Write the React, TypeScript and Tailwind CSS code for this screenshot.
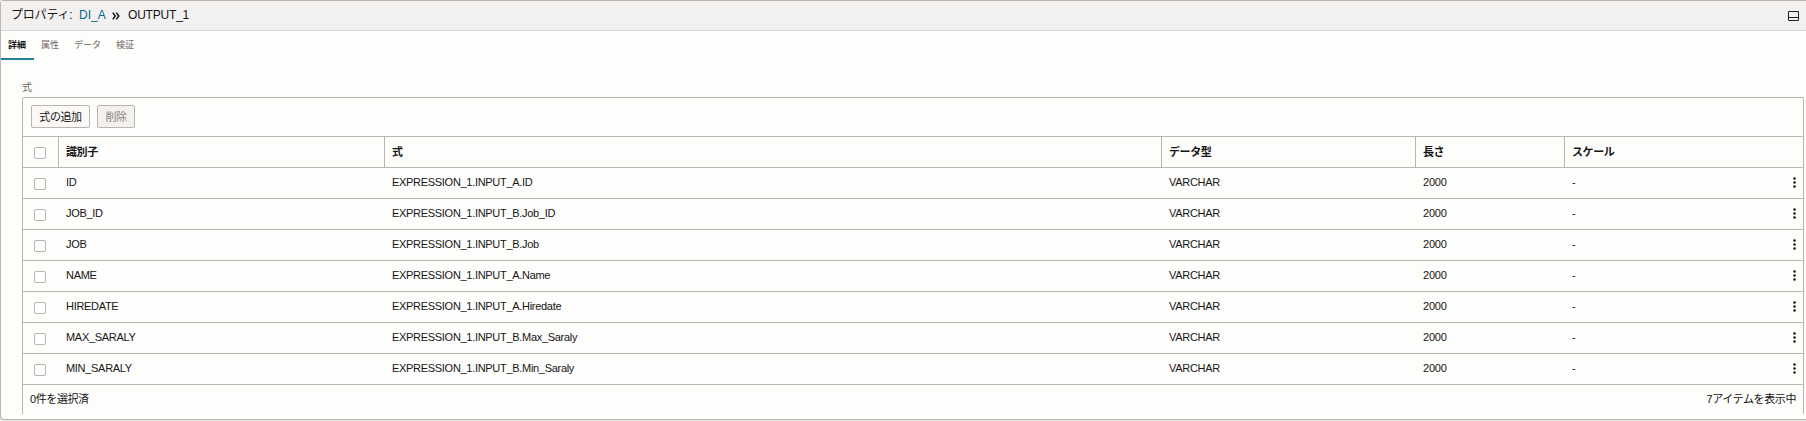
import clsx from "clsx";

const TABS = [
  { label: "詳細", className: "w-[33px] pl-[7px]" },
  { label: "属性", className: "w-[33px] pl-[7px]" },
  { label: "データ", className: "w-[42px] pl-[7px]" },
  { label: "検証", className: "w-[34px] pl-[7px]" },
];

const COLUMNS = ["識別子", "式", "データ型", "長さ", "スケール"];

const ROWS = [
  { id: "ID", expression: "EXPRESSION_1.INPUT_A.ID" },
  { id: "JOB_ID", expression: "EXPRESSION_1.INPUT_B.Job_ID" },
  { id: "JOB", expression: "EXPRESSION_1.INPUT_B.Job" },
  { id: "NAME", expression: "EXPRESSION_1.INPUT_A.Name" },
  { id: "HIREDATE", expression: "EXPRESSION_1.INPUT_A.Hiredate" },
  { id: "MAX_SARALY", expression: "EXPRESSION_1.INPUT_B.Max_Saraly" },
  { id: "MIN_SARALY", expression: "EXPRESSION_1.INPUT_B.Min_Saraly" },
];

const GRID = "grid grid-cols-[35px_326px_777px_254px_149px_1fr]";

function Checkbox() {
  return (
    <div className="pt-[10px] pl-[11px]">
      <span role="checkbox" aria-checked="false" className="block size-3 rounded-[2px] border border-[#b9b4ae] bg-white" />
    </div>
  );
}

function MoreIcon() {
  return (
    <svg width="3" height="11" viewBox="0 0 3 11" fill="#161513">
      <circle cx="1.5" cy="1.5" r="1.25" />
      <circle cx="1.5" cy="5.5" r="1.25" />
      <circle cx="1.5" cy="9.5" r="1.25" />
    </svg>
  );
}

function PanelHeader() {
  return (
    <header className="flex h-[30px] items-center justify-between border-b border-[#d1d5da] bg-[#f3f1f0] pr-[7px] pl-[10px] text-[12px] leading-[27px]">
      <div className="flex whitespace-pre">
        <span className="w-[68px] tracking-[-0.2px]">プロパティ: </span>
        <span className="w-[32px] text-[#006b8f]">DI_A</span>
        <svg className="mt-[10px] mr-[8px] ml-px" width="8" height="8" viewBox="0 0 8 8" fill="none" stroke="#161513" strokeWidth="1.5">
          <path d="M.8 .6 3.3 4 .8 7.4M4.3 .6 6.8 4 4.3 7.4" />
        </svg>
        <span className="tracking-[-0.2px]">OUTPUT_1</span>
      </div>
      <svg className="mt-px" width="11" height="10" viewBox="0 0 11 10" fill="none" stroke="#222" strokeWidth="1">
        <path d="M.5 .5h10v9H.5zM.5 6.5h10" />
      </svg>
    </header>
  );
}

function Tabs() {
  return (
    <nav className="flex h-[29px] text-[9px] leading-[29px] text-[#6f6a67]">
      {TABS.map((tab, i) => (
        <div key={tab.label} className={clsx(tab.className, i === 0 && "border-b-2 border-[#227e9e] font-bold text-[#161513]")}>
          {tab.label}
        </div>
      ))}
    </nav>
  );
}

export default function App() {
  return (
    <div className="h-[421px] overflow-hidden bg-[#e9e8e6] font-['Liberation_Sans','Noto_Sans_CJK_JP',sans-serif] text-[#161513]">
      <div className="flex h-[420px] flex-col rounded-l-[4px] border border-r-0 border-[#bbb5af] bg-[#fdfdfc]">
        <PanelHeader />
        <Tabs />
        <main className="flex flex-1 flex-col pr-[2px] pb-[5px] pl-[21px]">
          <div className="mt-[20px] h-[17px] text-[10px] leading-[15px] text-[#6f6a67]">式</div>
          <section className="flex-1 rounded-t-[2px] border border-b-0 border-[#bbb5af] text-[11px]">
            <div className="flex h-[38px] gap-[7px] pt-[7px] pl-2 text-[11px] leading-[20px] tracking-[-0.4px]">
              <button className="h-[23px] w-[59px] rounded-[2px] border border-[#bbb5af] bg-[#faf9f8]">式の追加</button>
              <button className="h-[23px] w-[38px] rounded-[2px] border border-[#bbb5af] bg-[#f3f1f0] text-[#8a8580]">削除</button>
            </div>
            <div className={clsx(GRID, "h-[31px] border-t border-[#bbb5af] leading-[30px] font-bold")}>
              <Checkbox />
              {COLUMNS.map((name) => (
                <div key={name} className="border-l border-[#bbb5af] pl-[7px] tracking-[-0.4px]">
                  {name}
                </div>
              ))}
            </div>
            {ROWS.map((row) => (
              <div key={row.id} className={clsx(GRID, "h-[31px] border-t border-[#bbb5af] leading-[28px] tracking-[-0.3px]")}>
                <Checkbox />
                <div className="pl-[8px]">{row.id}</div>
                <div className="pl-[8px]">{row.expression}</div>
                <div className="pl-[8px]">VARCHAR</div>
                <div className="pl-[8px] tracking-[-0.2px]">2000</div>
                <div className="flex justify-between pr-[7px] pl-[8px]">
                  <span>-</span>
                  <span className="pt-[9px]">
                    <MoreIcon />
                  </span>
                </div>
              </div>
            ))}
            <div className="flex h-[29px] justify-between border-t border-[#bbb5af] px-[7px] leading-[28px] tracking-[-0.4px]">
              <span>0件を選択済</span>
              <span>7アイテムを表示中</span>
            </div>
          </section>
        </main>
      </div>
    </div>
  );
}
